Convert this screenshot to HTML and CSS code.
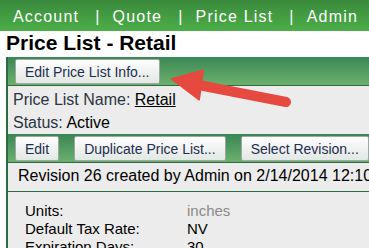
FILE: index.html
```html
<!DOCTYPE html>
<html lang="en">
<head>
    <meta charset="UTF-8">
    <meta name="viewport" content="width=device-width, initial-scale=1.0">
    <title>Price List - Retail</title>
    <link rel="stylesheet" href="styles.css">
</head>
<body>

<div class="topnav">
    <a href="#">Account</a><span class="sep">|</span><a href="#">Quote</a><span class="sep">|</span><a href="#">Price List</a><span class="sep">|</span><a href="#">Admin</a>
</div>

<h1 class="page-title">Price List - Retail</h1>

<div class="panel">
    <div class="toolbar">
        <button type="button">Edit Price List Info...</button>
    </div>
    <div class="info">
        <div>Price List Name: <a href="#" class="value">Retail</a></div>
        <div>Status: <span class="value">Active</span></div>
    </div>
    <div class="toolbar">
        <button type="button">Edit</button>
        <button type="button">Duplicate Price List...</button>
        <button type="button">Select Revision...</button>
    </div>
    <div class="revision">Revision 26 created by Admin on 2/14/2014 12:10:32 PM</div>
    <div class="details">
        <div class="label">Units:</div><div class="muted">inches</div>
        <div class="label">Default Tax Rate:</div><div>NV</div>
        <div class="label">Expiration Days:</div><div>30</div>
    </div>
</div>

<!-- callout arrow pointing at the edit button -->
<svg class="callout" width="369" height="248" viewBox="0 0 369 248">
    <line x1="196" y1="84.5" x2="286" y2="102" stroke="#e5493f" stroke-width="10" stroke-linecap="round"/>
    <polygon points="172,79 203,70.5 199,99.5" fill="#e5493f" stroke="#e5493f" stroke-width="2" stroke-linejoin="round"/>
</svg>

</body>
</html>
```

FILE: styles.css
```css
body {
    margin: 0;
    font-family: "Liberation Sans", Arial, sans-serif;
    background-color: #fff;
    overflow: hidden;
}
.topnav {
    height: 31px;
    line-height: 31px;
    padding: 1px 0 0 13px;
    box-sizing: border-box;
    background: linear-gradient(#3a8a3c, #4cae48);
    color: #fff;
    font-size: 16px;
    letter-spacing: 1.2px;
    white-space: nowrap;
}
.topnav a {
    color: #fff;
    text-decoration: none;
}
.topnav .sep {
    margin: 0 12px 0 16px;
}
.page-title {
    margin: 0 0 2px;
    padding: 0 6px;
    font-size: 21px;
    line-height: 24px;
    color: #000;
}
.panel {
    width: 600px;
    margin-left: 6px;
    border-left: 2px solid #2f6b42;
    background-color: #ececec;
}
.toolbar {
    display: flex;
    gap: 15px;
    padding: 2px 7px 1px;
    background: linear-gradient(#3a8656, #6cb06c);
    border-bottom: 1px solid #2f6b42;
}
.toolbar button {
    height: 25px;
    padding: 0 9px;
    font-family: "Liberation Sans", Arial, sans-serif;
    font-size: 14px;
    color: #1f2d50;
    background: linear-gradient(#fdfdfd, #e2e8e4);
    border: 1px solid #9ea8a2;
    border-radius: 2px;
}
.info {
    padding: 2px 5px 0;
    font-size: 16px;
    line-height: 23px;
    color: #2b3540;
}
.info .value {
    color: #000;
}
.revision {
    padding: 2px 10px 4px;
    font-size: 16px;
    line-height: 22px;
    color: #000;
    white-space: nowrap;
    border-bottom: 1px solid #2f6b42;
}
.details {
    display: grid;
    grid-template-columns: 162px auto;
    padding: 10px 17px 0;
    font-size: 15px;
    line-height: 18px;
    color: #000;
}
.details .muted {
    color: #8a8a8a;
}
.callout {
    position: absolute;
    left: 0;
    top: 0;
}
```
